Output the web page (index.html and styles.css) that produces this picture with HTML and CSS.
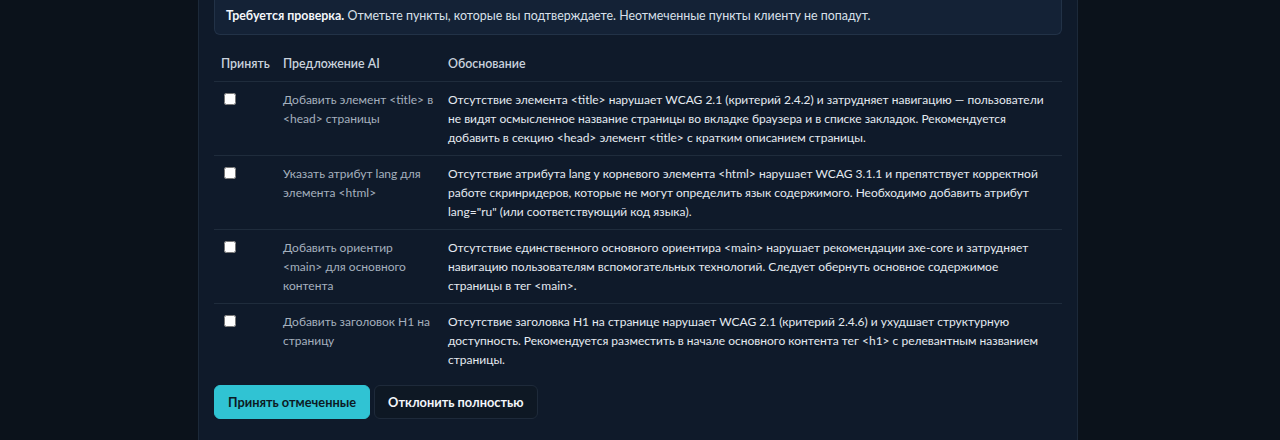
FILE: index.html
```html
<!DOCTYPE html>
<html lang="ru">
<head>
  <meta charset="utf-8">
  <title>Проверка рекомендаций AI</title>
  <link rel="stylesheet" href="styles.css">
</head>
<body>
  <div class="panel">
    <div class="notice">
      <strong>Требуется проверка.</strong> Отметьте пункты, которые вы подтверждаете. Неотмеченные пункты клиенту не попадут.
    </div>

    <table class="review-table">
      <thead>
        <tr>
          <th class="col-accept">Принять</th>
          <th class="col-suggest">Предложение AI</th>
          <th>Обоснование</th>
        </tr>
      </thead>
      <tbody>
        <tr>
          <td><input type="checkbox"></td>
          <td class="suggest">Добавить элемент &lt;title&gt; в &lt;head&gt; страницы</td>
          <td class="reason">Отсутствие элемента &lt;title&gt; нарушает WCAG 2.1 (критерий 2.4.2) и затрудняет навигацию — пользователи не видят осмысленное название страницы во вкладке браузера и в списке закладок. Рекомендуется добавить в секцию &lt;head&gt; элемент &lt;title&gt; с кратким описанием страницы.</td>
        </tr>
        <tr>
          <td><input type="checkbox"></td>
          <td class="suggest">Указать атрибут lang для элемента &lt;html&gt;</td>
          <td class="reason">Отсутствие атрибута lang у корневого элемента &lt;html&gt; нарушает WCAG 3.1.1 и препятствует корректной работе скринридеров, которые не могут определить язык содержимого. Необходимо добавить атрибут lang="ru" (или соответствующий код языка).</td>
        </tr>
        <tr>
          <td><input type="checkbox"></td>
          <td class="suggest">Добавить ориентир<br>&lt;main&gt; для основного контента</td>
          <td class="reason">Отсутствие единственного основного ориентира &lt;main&gt; нарушает рекомендации axe-core и затрудняет навигацию пользователям вспомогательных технологий. Следует обернуть основное содержимое страницы в тег &lt;main&gt;.</td>
        </tr>
        <tr>
          <td><input type="checkbox"></td>
          <td class="suggest">Добавить заголовок H1 на страницу</td>
          <td class="reason">Отсутствие заголовка H1 на странице нарушает WCAG 2.1 (критерий 2.4.6) и ухудшает структурную доступность. Рекомендуется разместить в начале основного контента тег &lt;h1&gt; с релевантным названием страницы.</td>
        </tr>
      </tbody>
    </table>

    <div class="actions">
      <button class="btn btn-primary">Принять отмеченные</button>
      <button class="btn btn-ghost">Отклонить полностью</button>
    </div>
  </div>
</body>
</html>
```

FILE: styles.css
```css
body {
  background-color: #0b121b;
  margin: 0;
  padding: 0 4px 0 0;
  font-family: Lato, "Liberation Sans", Arial, sans-serif;
  font-size: 12px;
  line-height: 19px;
  color: #e3e8ef;
}

.panel {
  width: 848px;
  margin: -2px auto 0;
  padding: 0 15px 40px;
  background-color: #0f1a2a;
  border-left: 1px solid #1c2939;
  border-right: 1px solid #1c2939;
}

.notice {
  padding: 8px 11px 9px;
  font-size: 12.4px;
  background-color: #142236;
  border: 1px solid #223247;
  border-top: none;
  border-radius: 0 0 6px 6px;
  color: #d9e0ea;
}

.notice strong {
  color: #f3f6fa;
  font-weight: 700;
}

.review-table {
  width: 100%;
  margin-top: 11px;
  border-collapse: collapse;
  table-layout: fixed;
}

.review-table th {
  text-align: left;
  font-size: 12.4px;
  font-weight: 600;
  color: #c9d2dd;
  padding: 8px 7px;
  border-bottom: 1px solid #1f2c3c;
}

.review-table td {
  vertical-align: top;
  padding: 8px 7px;
  border-bottom: 1px solid #1f2c3c;
}

.review-table tbody tr:last-child td {
  border-bottom: none;
}

.col-accept {
  width: 48px;
}

.col-suggest {
  width: 151px;
}

.review-table input[type="checkbox"] {
  margin: 3px 0 0 3px;
  width: 12px;
  height: 12px;
}

.review-table td.suggest {
  color: #a5b0be;
  padding-right: 2px;
}

.review-table td.reason {
  color: #e5eaf1;
}

.actions {
  display: flex;
  gap: 4px;
  margin-top: 8px;
}

.btn {
  font-family: inherit;
  font-size: 12.8px;
  font-weight: 700;
  padding: 8px 13px;
  border-radius: 6px;
  cursor: pointer;
}

.btn-primary {
  background-color: #30c3d3;
  color: #0c1a24;
  border: 1px solid #30c3d3;
}

.btn-ghost {
  background-color: #0e1824;
  color: #f3f6fa;
  border: 1px solid #1e2a3a;
}
```
